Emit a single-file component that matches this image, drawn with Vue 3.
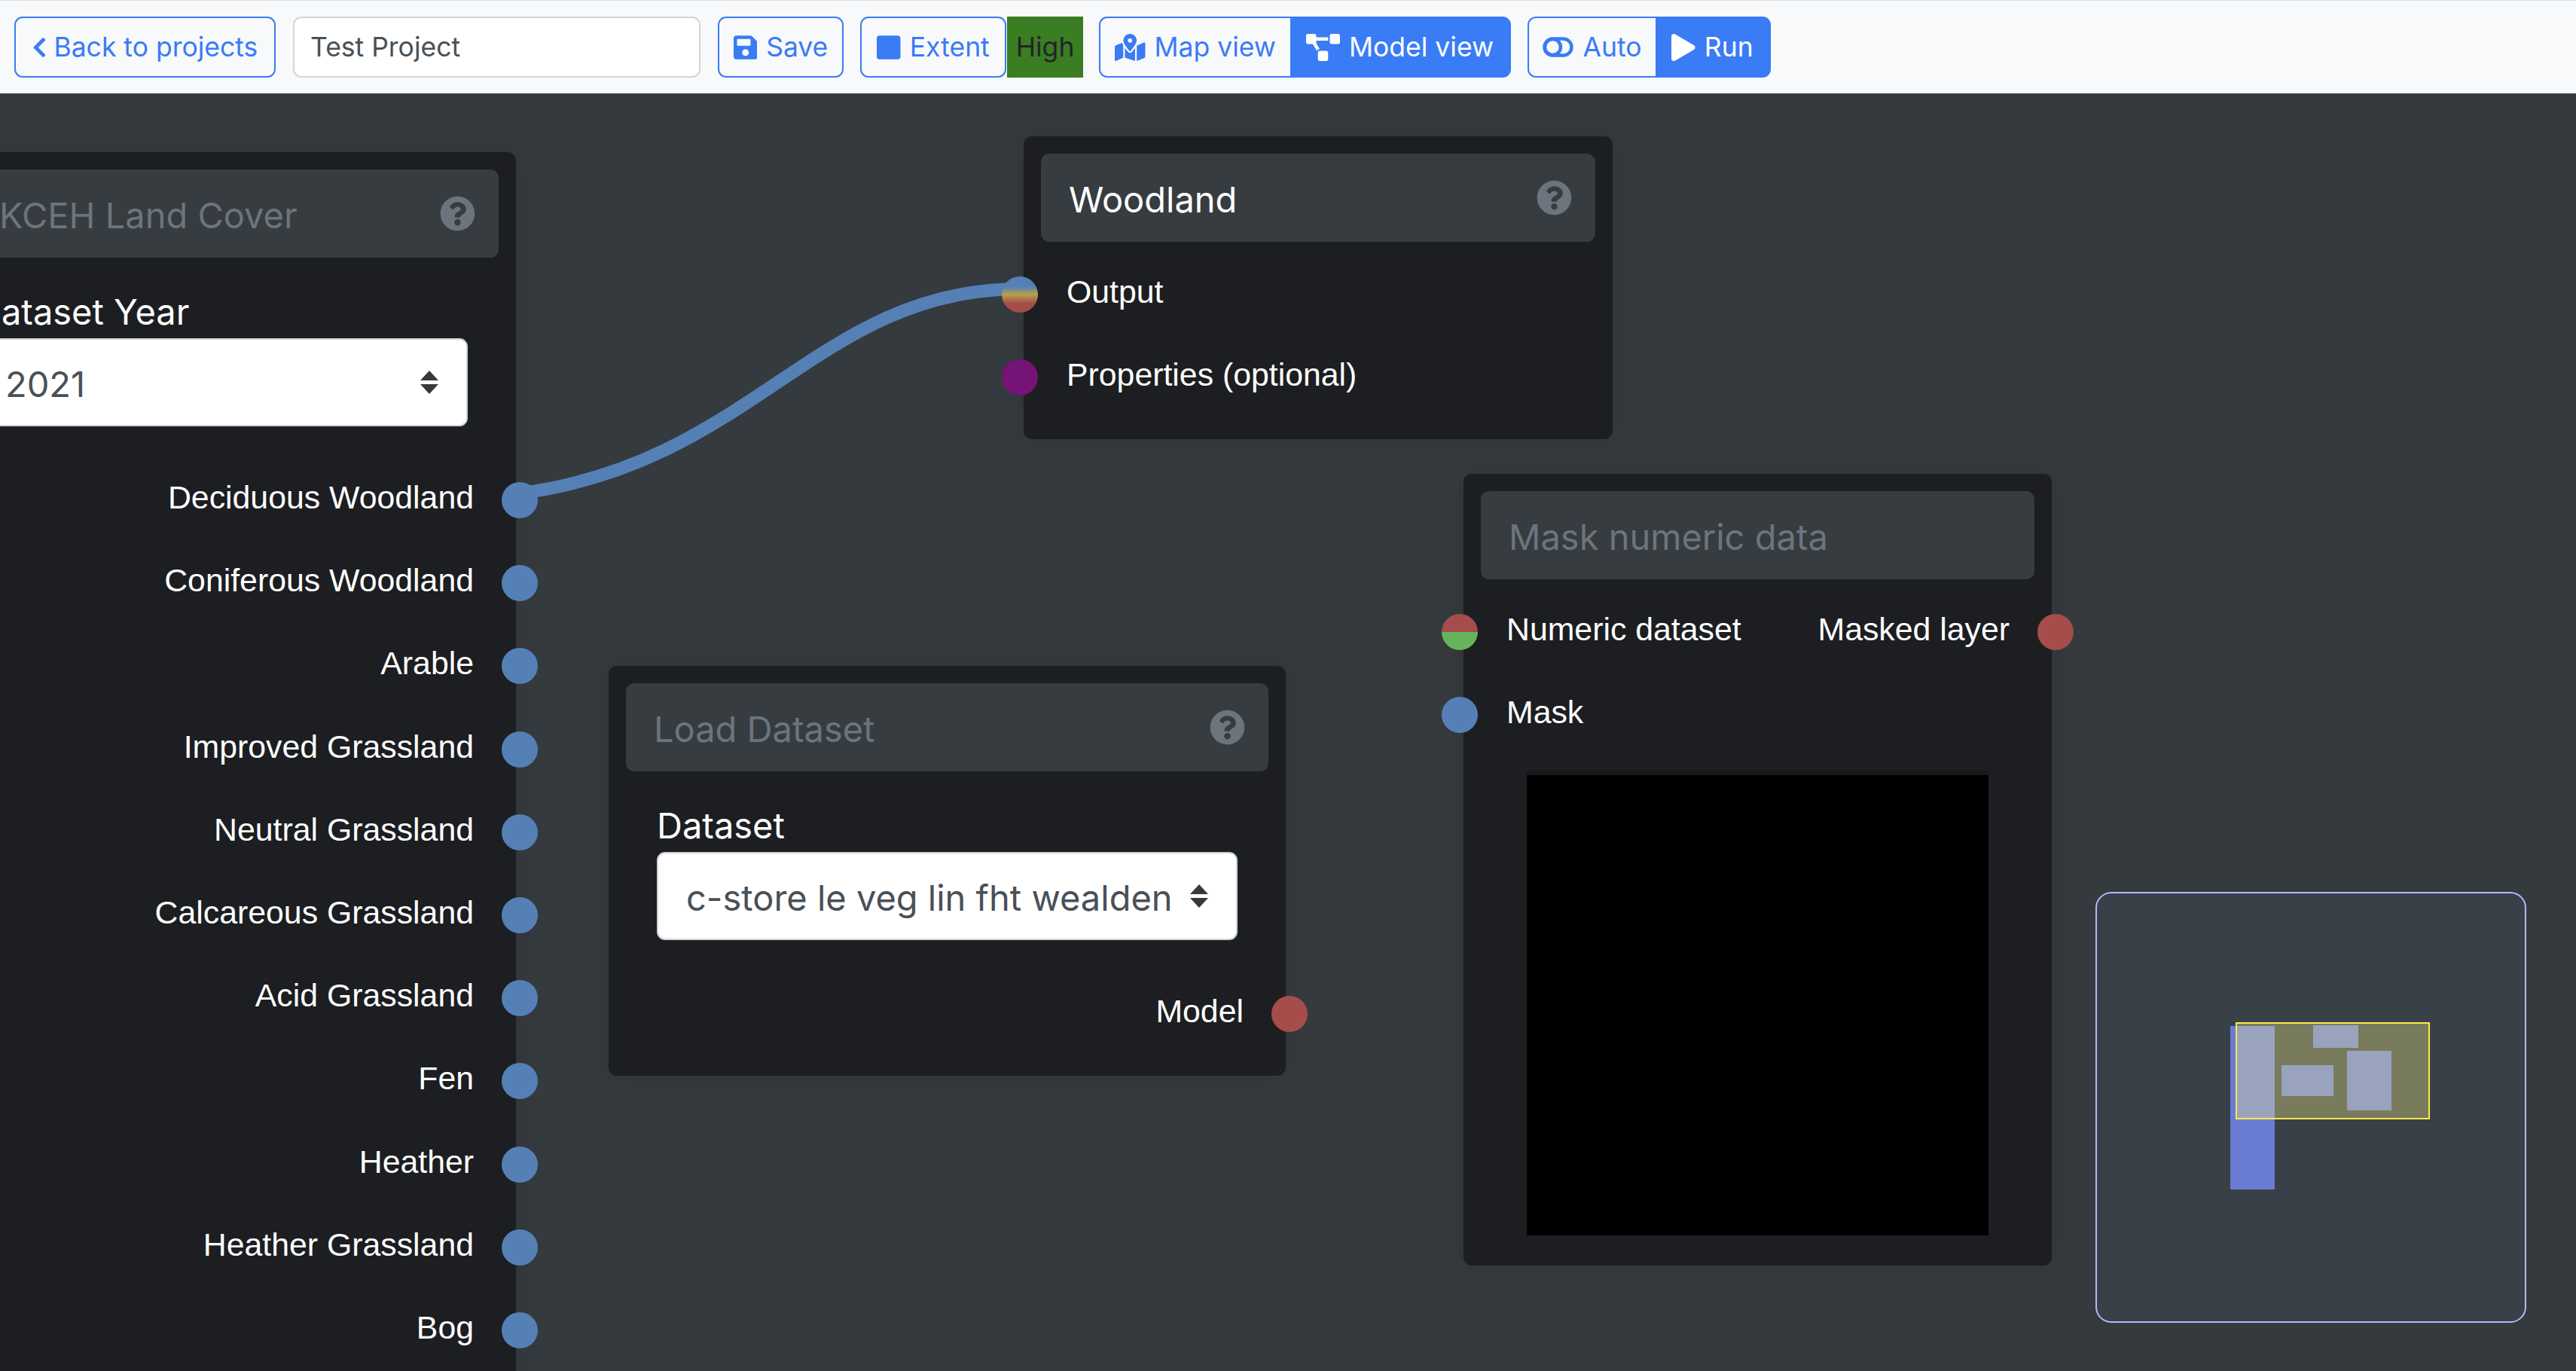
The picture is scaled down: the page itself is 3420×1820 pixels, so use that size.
<script setup>
const icons = {
  back: { box: "0 0 320 512", d: "M34.52 239.03L228.87 44.69c9.37-9.37 24.57-9.37 33.94 0l22.67 22.67c9.36 9.36 9.37 24.52.04 33.9L131.49 256l154.02 154.75c9.34 9.38 9.32 24.54-.04 33.9l-22.67 22.67c-9.37 9.37-24.57 9.37-33.94 0L34.52 272.97c-9.37-9.37-9.37-24.57 0-33.94z" },
  save: { box: "0 0 448 512", d: "M433.941 129.941l-83.882-83.882A48 48 0 0 0 316.118 32H48C21.49 32 0 53.49 0 80v352c0 26.51 21.49 48 48 48h352c26.51 0 48-21.49 48-48V163.882a48 48 0 0 0-14.059-33.941zM224 416c-35.346 0-64-28.654-64-64 0-35.346 28.654-64 64-64s64 28.654 64 64c0 35.346-28.654 64-64 64zm96-304.52V212c0 6.627-5.373 12-12 12H76c-6.627 0-12-5.373-12-12V108c0-6.627 5.373-12 12-12h228.52c3.183 0 6.235 1.264 8.485 3.515l3.48 3.48A11.996 11.996 0 0 1 320 111.48z" },
  square: { box: "0 0 448 512", d: "M400 32H48C21.5 32 0 53.5 0 80v352c0 26.5 21.5 48 48 48h352c26.5 0 48-21.5 48-48V80c0-26.5-21.5-48-48-48z" },
  map: { box: "0 0 576 512", d: "M288 0c-69.59 0-126 56.41-126 126 0 56.26 82.35 158.8 113.9 196.02 6.39 7.54 17.82 7.54 24.2 0C331.65 284.8 414 182.26 414 126 414 56.41 357.59 0 288 0zm0 168c-23.2 0-42-18.8-42-42s18.8-42 42-42 42 18.8 42 42-18.8 42-42 42zM20.12 215.95A32.006 32.006 0 0 0 0 245.66v250.32c0 11.32 11.43 19.06 21.94 14.86L160 448V214.92c-8.84-15.98-16.07-31.54-21.25-46.42L20.12 215.95zM288 359.67c-14.07 0-27.38-6.18-36.51-16.96-19.66-23.2-40.57-49.62-59.49-76.72v182l192 64V266c-18.92 27.09-39.82 53.52-59.49 76.72-9.13 10.77-22.44 16.95-36.51 16.95zm266.06-198.51L416 224v288l139.88-55.95A31.996 31.996 0 0 0 576 426.34V176.02c0-11.32-11.43-19.06-21.94-14.86z" },
  model: { box: "0 0 640 512", d: "M384 320H256c-17.67 0-32 14.33-32 32v128c0 17.67 14.33 32 32 32h128c17.67 0 32-14.33 32-32V352c0-17.67-14.33-32-32-32zM192 32c0-17.67-14.33-32-32-32H32C14.33 0 0 14.33 0 32v128c0 17.67 14.33 32 32 32h95.72l73.16 128.04C211.98 300.98 232.4 288 256 288h.28L192 175.51V128h224V64H192V32zM608 0H480c-17.67 0-32 14.33-32 32v128c0 17.67 14.33 32 32 32h128c17.67 0 32-14.33 32-32V32c0-17.67-14.33-32-32-32z" },
  run: { box: "0 0 448 512", d: "M424.4 214.7L72.4 6.6C43.8-10.3 0 6.1 0 47.9V464c0 37.5 40.7 60.1 72.4 41.3l352-208c31.4-18.5 31.5-64.1 0-82.6z" },
};

const helpPath = "M504 256c0 136.997-111.043 248-248 248S8 392.997 8 256C8 119.083 119.043 8 256 8s248 111.083 248 248zM262.655 90c-54.497 0-89.255 22.957-116.549 63.758-3.536 5.286-2.353 12.415 2.715 16.258l34.699 26.31c5.205 3.947 12.621 3.008 16.665-2.122 17.864-22.658 30.113-35.797 57.303-35.797 20.429 0 45.698 13.148 45.698 32.958 0 14.976-12.363 22.667-32.534 33.976C247.128 238.528 216 254.941 216 296v4c0 6.627 5.373 12 12 12h56c6.627 0 12-5.373 12-12v-1.333c0-28.462 83.186-29.647 83.186-106.667 0-58.002-60.165-102-116.531-102zM256 338c-25.365 0-46 20.635-46 46 0 25.364 20.635 46 46 46s46-20.635 46-46c0-25.365-20.635-46-46-46z";

const landCover = [
  "Deciduous Woodland", "Coniferous Woodland", "Arable", "Improved Grassland",
  "Neutral Grassland", "Calcareous Grassland", "Acid Grassland", "Fen",
  "Heather", "Heather Grassland", "Bog",
];

const nodes = [
  {
    title: "UKCEH Land Cover", left: -96, top: 78, width: 781, muted: true, help: true,
    field: { label: "Dataset Year", value: "2021" },
    rows: landCover.map((label) => ({ output: { label, type: "blue" } })),
  },
  {
    title: "Woodland", left: 1359, top: 57, width: 782, help: true,
    rows: [
      { input: { label: "Output", type: "mixed" } },
      { input: { label: "Properties (optional)", type: "purple" } },
    ],
  },
  {
    title: "Load Dataset", left: 808, top: 760, width: 899, muted: true, help: true,
    field: { label: "Dataset", value: "c-store le veg lin fht wealden" },
    rows: [{ output: { label: "Model", type: "red" } }],
  },
  {
    title: "Mask numeric data", left: 1943, top: 505, width: 781, muted: true, preview: true,
    rows: [
      { input: { label: "Numeric dataset", type: "split" }, output: { label: "Masked layer", type: "red" } },
      { input: { label: "Mask", type: "blue" } },
    ],
  },
];

const miniNodes = [
  { left: 177, top: 176, width: 59, height: 217 },
  { left: 287, top: 175, width: 60, height: 30 },
  { left: 245, top: 228, width: 69, height: 41 },
  { left: 332, top: 209, width: 59, height: 79 },
];

const place = (n) => ({
  left: n.left + "px",
  top: n.top + "px",
  width: n.width + "px",
  height: n.height ? n.height + "px" : undefined,
});
</script>

<template>
  <div class="app">
    <header class="toolbar">
      <button class="btn back">
        <svg class="ico chevron" :viewBox="icons.back.box"><path :d="icons.back.d" /></svg>
        Back to projects
      </button>
      <div class="project-name">Test Project</div>
      <button class="btn save">
        <svg class="ico" :viewBox="icons.save.box"><path :d="icons.save.d" /></svg>
        Save
      </button>
      <div class="extent-group">
        <button class="btn extent">
          <svg class="ico" :viewBox="icons.square.box"><path :d="icons.square.d" /></svg>
          Extent
        </button>
        <span class="quality">High</span>
      </div>
      <div class="btn-group">
        <button class="btn map">
          <svg class="ico" :viewBox="icons.map.box"><path :d="icons.map.d" /></svg>
          Map view
        </button>
        <button class="btn active model">
          <svg class="ico" :viewBox="icons.model.box"><path :d="icons.model.d" /></svg>
          Model view
        </button>
      </div>
      <div class="btn-group run-group">
        <button class="btn auto">
          <svg class="ico auto-ico" viewBox="0 0 41 27">
            <rect x="2.5" y="2.5" width="36" height="22" rx="11" />
            <circle cx="13.5" cy="13.5" r="10.5" />
          </svg>
          Auto
        </button>
        <button class="btn active run">
          <svg class="ico" :viewBox="icons.run.box"><path :d="icons.run.d" /></svg>
          Run
        </button>
      </div>
    </header>

    <main class="canvas">
      <svg class="wires" width="3420" height="1696">
        <path d="M689 531 C1000 491 1085 259.5 1355 259.5" />
      </svg>

      <section v-for="node in nodes" :key="node.title" class="node" :style="place(node)">
        <div class="node-title" :class="{ muted: node.muted }">
          <span>{{ node.title }}</span>
          <svg v-if="node.help" class="help" viewBox="0 0 512 512"><path :d="helpPath" /></svg>
        </div>

        <div v-if="node.field" class="field">
          <div class="field-label">{{ node.field.label }}</div>
          <div class="select">
            <span>{{ node.field.value }}</span>
            <svg class="arrows" viewBox="0 0 24 31">
              <path d="M12 0 L24 13 H0 Z M12 31 L0 18 H24 Z" />
            </svg>
          </div>
        </div>

        <div class="rows" :class="{ 'after-field': node.field }">
          <div v-for="(row, i) in node.rows" :key="i" class="row">
            <div v-if="row.input" class="port in">
              <i class="socket" :class="row.input.type"></i>
              <span>{{ row.input.label }}</span>
            </div>
            <div v-if="row.output" class="port out">
              <span>{{ row.output.label }}</span>
              <i class="socket" :class="row.output.type"></i>
            </div>
          </div>
        </div>

        <div v-if="node.preview" class="preview"></div>
      </section>

      <aside class="minimap">
        <div v-for="(m, i) in miniNodes" :key="i" class="mini-node" :style="place(m)"></div>
        <div class="mini-view"></div>
      </aside>
    </main>
  </div>
</template>

<style>
html, body {
  margin: 0;
  background: #353a3e;
}
</style>

<style scoped>
.app {
  width: 3420px;
  height: 1820px;
  display: flex;
  flex-direction: column;
  overflow: hidden;
  font-family: Inter, "Liberation Sans", sans-serif;
}

.toolbar {
  box-sizing: border-box;
  flex: 0 0 124px;
  display: flex;
  align-items: center;
  padding: 0 19px;
  border-top: 1px solid #dee2e6;
  background: #f8f9fa;
  font-size: 35.5px;
}

.btn {
  box-sizing: border-box;
  height: 81px;
  display: flex;
  align-items: center;
  justify-content: center;
  gap: 12px;
  padding: 0;
  border: 2px solid #3a7bf6;
  border-radius: 11px;
  background: transparent;
  color: #3a7bf6;
  font: inherit;
  white-space: nowrap;
}

.btn.active {
  background: #3a7bf6;
  color: #fff;
}

.ico {
  height: 36px;
  fill: currentColor;
  flex: none;
}

.chevron {
  height: 30px;
  margin-right: -2px;
}

.auto-ico {
  height: 27px;
  fill: none;
  stroke: currentColor;
  stroke-width: 4.5;
}

.back { width: 347px; }
.save { width: 167px; margin-left: 23px; }
.extent { width: 194px; border-radius: 11px; }
.map { width: 254px; border-radius: 11px 0 0 11px; border-right: 0; }
.model { width: 293px; border-radius: 0 11px 11px 0; border-left: 0; }
.auto { width: 170px; border-radius: 11px 0 0 11px; border-right: 0; }
.run { width: 153px; border-radius: 0 11px 11px 0; border-left: 0; }

.project-name {
  box-sizing: border-box;
  width: 541px;
  height: 81px;
  margin-left: 23px;
  padding: 0 21px;
  display: flex;
  align-items: center;
  border: 2px solid #d2d5da;
  border-radius: 11px;
  background: #fff;
  color: #495057;
}

.extent-group {
  display: flex;
  margin-left: 22px;
  gap: 1px;
}

.quality {
  width: 101px;
  height: 81px;
  display: flex;
  align-items: center;
  justify-content: center;
  background: #3a7d22;
  color: #212529;
}

.btn-group {
  display: flex;
  margin-left: 21px;
}

.run-group {
  margin-left: 22px;
}

.canvas {
  position: relative;
  flex: 1;
  overflow: hidden;
  background: #353a3e;
}

.wires {
  position: absolute;
  left: 0;
  top: 0;
}

.wires path {
  fill: none;
  stroke: #5580b5;
  stroke-width: 17;
}

.node {
  position: absolute;
  box-sizing: border-box;
  padding: 23px 23px 27px;
  border-radius: 11px;
  background: #1c1e21;
  box-shadow: 0 0 30px rgba(0, 0, 0, 0.12);
}

.node-title {
  box-sizing: border-box;
  height: 117px;
  display: flex;
  align-items: center;
  justify-content: space-between;
  padding: 0 31px 0 37px;
  border-radius: 11px;
  background: #373c40;
  color: #fff;
  font-size: 47px;
}

.node-title span {
  padding-top: 3px;
}

.node-title.muted {
  color: #6c757d;
}

.help {
  width: 47px;
  height: 47px;
  fill: #6c757d;
}

.field {
  margin: 40px 41px 0;
  color: #fff;
  font-size: 47px;
}

.field-label {
  height: 67px;
  line-height: 64px;
}

.select {
  box-sizing: border-box;
  height: 117px;
  display: flex;
  align-items: center;
  justify-content: space-between;
  padding: 0 37px;
  border: 2px solid #ced4da;
  border-radius: 11px;
  background: #fff;
  color: #495057;
  font-size: 47px;
}

.select span {
  padding-top: 3px;
}

.arrows {
  width: 24px;
  height: 31px;
  fill: #343a40;
  flex: none;
}

.rows {
  margin-top: 15px;
}

.rows.after-field {
  margin-top: 43px;
}

.row {
  height: 110.2px;
  display: flex;
  align-items: center;
  justify-content: space-between;
  color: #fff;
  font: 42.8px "Liberation Sans", Arial, sans-serif;
}

.port {
  position: relative;
  display: flex;
  align-items: center;
  height: 100%;
}

.port span {
  margin-top: -7px;
}

.port.in {
  padding-left: 34px;
}

.port.out {
  margin-left: auto;
  padding-right: 33px;
}

.socket {
  position: absolute;
  top: 31px;
  width: 48px;
  height: 48px;
  border-radius: 50%;
}

.port.in .socket {
  left: -52px;
}

.port.out .socket {
  right: -52px;
}

.socket.blue { background: #5580b5; }
.socket.red { background: #a54d4a; }
.socket.purple { background: #761377; }
.socket.split { background: linear-gradient(#a54d4a 50%, #67b35c 50%); }
.socket.mixed { background: linear-gradient(#5580b5 28%, #b5a24d 50%, #a54d4a 74%); }

.preview {
  box-sizing: content-box;
  width: 613px;
  height: 611px;
  margin: 19px auto 13px;
  border-top: 6px solid #19191b;
  background: #000;
}

.minimap {
  position: absolute;
  box-sizing: border-box;
  left: 2782px;
  top: 1060px;
  width: 572px;
  height: 572px;
  border: 2px solid #b3b8ff;
  border-radius: 21px;
  background: #3a4048;
}

.mini-node {
  position: absolute;
  background: #6a7bd4;
}

.mini-view {
  position: absolute;
  box-sizing: border-box;
  left: 184px;
  top: 171px;
  width: 258px;
  height: 129px;
  border: 2px solid #ffe84f;
  background: rgba(255, 250, 140, 0.32);
}
</style>
